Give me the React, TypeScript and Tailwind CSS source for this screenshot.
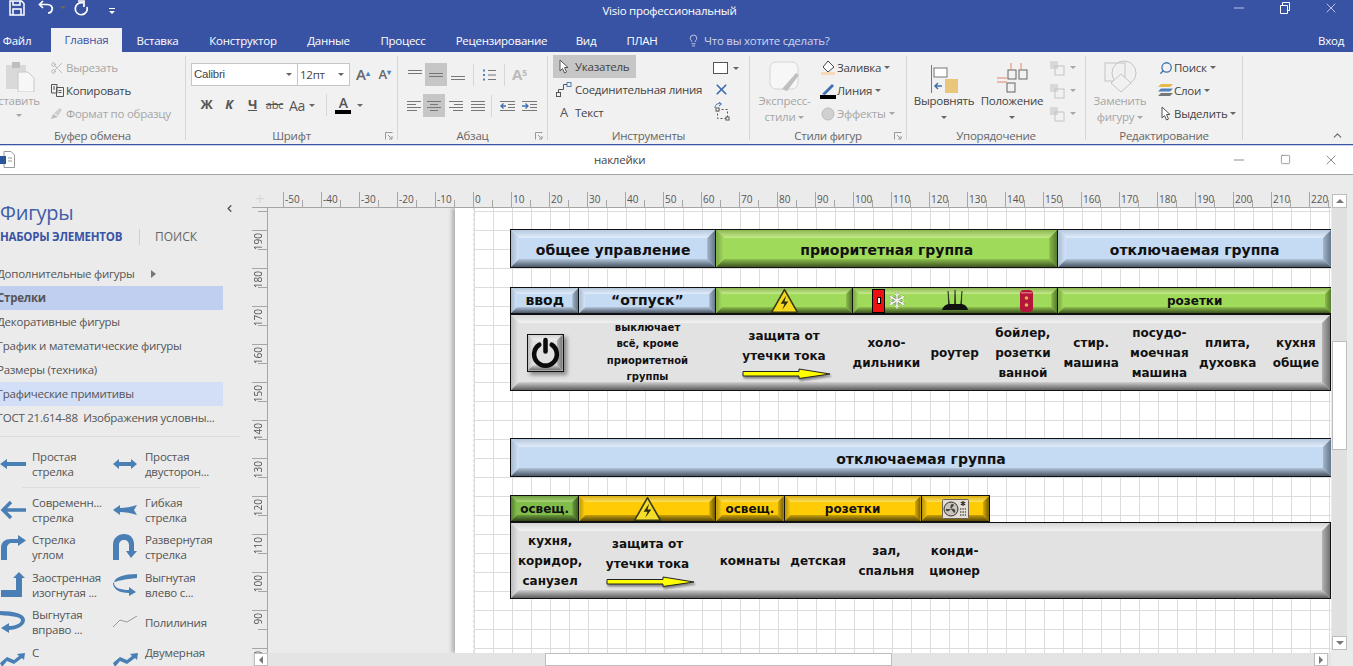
import { ReactNode } from 'react'
import { Scissors, Search, Lightbulb, ChevronUp, ChevronLeft, X, Minus, Square } from 'lucide-react'

const tones = {
    blue: {
        body: 'bg-[#c5daf3]',
        top: 'from-[#b6c9de] to-[#e2edfb]',
        left: 'from-[#a6bad0] to-[#d5e4f6]',
        right: 'from-[#a5b6ca] to-[#66778b]',
        bottom: 'from-[#b4c6db] to-[#4a5766]',
    },
    green: {
        body: 'bg-[#a0da5b]',
        top: 'from-[#8db751] to-[#c5ec8c]',
        left: 'from-[#7ba646] to-[#a5dd60]',
        right: 'from-[#8cbc4d] to-[#567a2d]',
        bottom: 'from-[#8fc04e] to-[#3c5520]',
    },
    moss: {
        body: 'bg-[#80bd4a]',
        top: 'from-[#6f9f3f] to-[#a6d678]',
        left: 'from-[#557d30] to-[#86c24e]',
        right: 'from-[#6f9f3f] to-[#3f5e22]',
        bottom: 'from-[#6b9a3c] to-[#2e4519]',
    },
    yellow: {
        body: 'bg-[#ffcb05]',
        top: 'from-[#d8ad00] to-[#ffe25a]',
        left: 'from-[#b8950a] to-[#ffcf10]',
        right: 'from-[#d9ae00] to-[#6f5a0a]',
        bottom: 'from-[#c9a000] to-[#5a4a0a]',
    },
    gray: {
        body: 'bg-[#e2e2e2]',
        top: 'from-[#d6d6d6] to-[#f2f2f2]',
        left: 'from-[#bdbdbd] to-[#e6e6e6]',
        right: 'from-[#b4b4b4] to-[#727272]',
        bottom: 'from-[#d0d0d0] to-[#606060]',
    },
}

function Bevel({ tone, small, className, children }: { tone: keyof typeof tones; small?: boolean; className?: string; children?: ReactNode }) {
    const t = tones[tone]
    return (
        <div className={`relative -mr-px overflow-hidden border border-[#111] ${t.body} ${className || ''}`}>
            {small ? (
                <>
                    <span className={`absolute inset-x-0 top-0 h-[6px] bg-gradient-to-b ${t.top} [clip-path:polygon(0_0,100%_0,calc(100%-6px)_100%,6px_100%)]`} />
                    <span className={`absolute inset-y-0 left-0 w-[6px] bg-gradient-to-r ${t.left} [clip-path:polygon(0_0,100%_6px,100%_calc(100%-6px),0_100%)]`} />
                    <span className={`absolute inset-y-0 right-0 w-[6px] bg-gradient-to-r ${t.right} [clip-path:polygon(0_6px,100%_0,100%_100%,0_calc(100%-6px))]`} />
                    <span className={`absolute inset-x-0 bottom-0 h-[6px] bg-gradient-to-b ${t.bottom} [clip-path:polygon(6px_0,calc(100%-6px)_0,100%_100%,0_100%)]`} />
                </>
            ) : (
                <>
                    <span className={`absolute inset-x-0 top-0 h-[8px] bg-gradient-to-b ${t.top} [clip-path:polygon(0_0,100%_0,calc(100%-8px)_100%,8px_100%)]`} />
                    <span className={`absolute inset-y-0 left-0 w-[8px] bg-gradient-to-r ${t.left} [clip-path:polygon(0_0,100%_8px,100%_calc(100%-8px),0_100%)]`} />
                    <span className={`absolute inset-y-0 right-0 w-[8px] bg-gradient-to-r ${t.right} [clip-path:polygon(0_8px,100%_0,100%_100%,0_calc(100%-8px))]`} />
                    <span className={`absolute inset-x-0 bottom-0 h-[8px] bg-gradient-to-b ${t.bottom} [clip-path:polygon(8px_0,calc(100%-8px)_0,100%_100%,0_100%)]`} />
                </>
            )}
            <div className="relative flex h-full items-center justify-center text-center font-bold text-[#111]">{children}</div>
        </div>
    )
}

function Hazard({ dark }: { dark?: boolean }) {
    return (
        <svg width="29" height="26" viewBox="0 0 26 24" className="shrink-0">
            <path d="M13 1.5 L25 22.5 H1 Z" fill={dark ? '#f4dc2a' : '#f3d81d'} stroke="#3a3a14" strokeWidth="1.5" strokeLinejoin="round" />
            <path d="M14.5 7 L9.5 14.5 H13 L11 20 L16.5 12.5 H13 Z" fill="#2a2a12" />
        </svg>
    )
}

function YellowArrow() {
    return (
        <svg width="90" height="12" viewBox="0 0 90 12" className="ml-[6px] mt-[2px] drop-shadow-[1px_2px_1px_rgba(0,0,0,0.45)]">
            <path d="M1 3.5 H57 V1 L88 6 L57 10.5 V8 H1 Z" fill="#ffff00" stroke="#222" strokeWidth="1" />
        </svg>
    )
}

function Snowflake() {
    return (
        <svg width="18" height="19" viewBox="0 0 18 18" fill="none" className="shrink-0">
            <path d="M9 1 V17 M2 5 L16 13 M2 13 L16 5" stroke="#6f7f68" strokeWidth="2.6" />
            <path d="M9 1 V17 M2 5 L16 13 M2 13 L16 5" stroke="#f6f6f6" strokeWidth="1.5" />
            <path d="M7 2.5 L9 4.5 L11 2.5 M7 15.5 L9 13.5 L11 15.5 M2 8 L4.5 6.5 L3.5 4 M16 8 L13.5 6.5 L14.5 4 M2 10 L4.5 11.5 L3.5 14 M16 10 L13.5 11.5 L14.5 14" stroke="#f6f6f6" strokeWidth="1" />
        </svg>
    )
}

function Router() {
    return (
        <svg width="28" height="21" viewBox="0 0 28 21" fill="#111" className="shrink-0">
            <path d="M7 1 L8.5 15 H7.6 Z M14 0 L14.7 15 H13.5 Z M21 1 L19.6 15 H20.4 Z" stroke="#111" strokeWidth="0.5" />
            <path d="M1 20 C2 16 6 14 8 14 H20 C23 14 26 16 27 20 Z" />
        </svg>
    )
}

function Boiler() {
    return (
        <svg width="15" height="24" viewBox="0 0 15 24" className="shrink-0">
            <rect x="1" y="1" width="13" height="22" rx="4" fill="#b3163a" />
            <rect x="2" y="3" width="11" height="1.5" fill="#e06a7a" />
            <circle cx="7.5" cy="9" r="1.8" fill="#e8b24f" />
            <circle cx="7.5" cy="16" r="1.8" fill="#e8b24f" />
        </svg>
    )
}

function AirCon() {
    return (
        <svg width="27" height="20" viewBox="0 0 27 20" className="shrink-0">
            <rect x="0.5" y="0.5" width="26" height="19" rx="1" fill="#e6ded4" stroke="#6b6257" />
            <circle cx="9" cy="10" r="7" fill="#c9c3ba" stroke="#333" />
            <path d="M9 10 C7 5 11 4 12 6 Z M9 10 C14 9 14 13 12 14 Z M9 10 C6 14 3 12 4 10 Z" fill="#444" />
            <path d="M21 2 V7 M18.8 3.2 L23.2 5.8 M23.2 3.2 L18.8 5.8" stroke="#222" strokeWidth="1.1" />
            <path d="M18 10 H24 M18 13 H24 M18 16 H24" stroke="#555" strokeWidth="1.6" strokeDasharray="1.4 1" />
        </svg>
    )
}

function PowerButton() {
    return (
        <Bevel tone="gray" small className="!mr-0 h-[38px] w-[37px] shadow-[3px_3px_4px_rgba(0,0,0,0.4)]">
            <svg width="31" height="31" viewBox="0 0 30 30" fill="none" stroke="#0b0b0b" strokeWidth="4.4" strokeLinecap="round" className="shrink-0">
                <path d="M15 3 V14" />
                <path d="M9 7.5 A11 11 0 1 0 21 7.5" />
            </svg>
        </Bevel>
    )
}

function Caret({ light }: { light?: boolean }) {
    return <span className={`inline-block h-0 w-0 border-x-[3px] border-t-[3px] border-x-transparent ${light ? 'border-t-[#a6a6a6]' : 'border-t-[#666]'}`} />
}

function Lines({ rows, w = 14, h = 14, color = '#777' }: { rows: [number, number, number][]; w?: number; h?: number; color?: string }) {
    return (
        <svg width={w} height={h} viewBox={`0 0 ${w} ${h}`} stroke={color} strokeWidth="1">
            {rows.map((r, i) => <path key={i} d={`M${r[0]} ${r[2] + 0.5} H${r[1]}`} />)}
        </svg>
    )
}

function Launcher() {
    return (
        <svg width="8" height="8" viewBox="0 0 8 8" fill="none" stroke="#999">
            <path d="M0.5 7.5 V0.5 H7.5 M3 3 L7 7 M7 4 V7 H4" />
        </svg>
    )
}

function Group({ w, label, launcher, children }: { w: string; label: string; launcher?: boolean; children: ReactNode }) {
    return (
        <div className={`mt-1 flex h-[84px] shrink-0 flex-col border-r border-[#d6d6d6] ${w}`}>
            <div className="h-[72px] shrink-0">{children}</div>
            <div className="relative h-[16px] shrink-0 text-center text-[11.5px] leading-[16px] text-[#666]">
                {label}
                {launcher && <span className="absolute right-[4px] top-[4px] flex"><Launcher /></span>}
            </div>
        </div>
    )
}

function SmallRow({ icon, text, gray, caret, iconW = 'w-[18px]', className }: { icon?: ReactNode; text: string; gray?: boolean; caret?: boolean; iconW?: string; className?: string }) {
    return (
        <div className={`flex h-[23px] items-center whitespace-nowrap text-[11.5px] ${gray ? 'text-[#a6a6a6]' : 'text-[#444]'} ${className || ''}`}>
            <span className={`flex shrink-0 justify-center ${iconW}`}>{icon}</span>
            <span>{text}</span>
            {caret && <span className="ml-[3px] flex"><Caret light={gray} /></span>}
        </div>
    )
}

function BigButton({ w, lines, gray, icon, className }: { w: string; lines: string[]; gray?: boolean; icon: ReactNode; className?: string }) {
    return (
        <div className={`flex flex-col items-center whitespace-nowrap text-[11.5px] leading-[16px] ${gray ? 'text-[#a6a6a6]' : 'text-[#444]'} ${w} ${className || ''}`}>
            <div className="flex h-[37px] items-end">{icon}</div>
            <div>{lines[0]}</div>
            <div className="flex h-[16px] items-center gap-[3px]">{lines[1]}<Caret light={gray} /></div>
        </div>
    )
}

function Ribbon() {
    const tabs = [
        ['Файл', 'w-[34px]'], ['Вставка', 'w-[71px]'], ['Конструктор', 'w-[100px]'], ['Данные', 'w-[71px]'],
        ['Процесс', 'w-[78px]'], ['Рецензирование', 'w-[119px]'], ['Вид', 'w-[50px]'], ['ПЛАН', 'w-[62px]'],
    ]
    return (
        <>
            <div className="relative flex h-[28px] items-start bg-[#3953a4] text-white">
                <svg width="16" height="16" viewBox="0 0 16 16" fill="none" stroke="white" strokeWidth="1.5" className="ml-[9px]">
                    <path d="M1 1 H12.5 L15 3.5 V15 H1 Z" /><path d="M4 1 V5 H11 V1 M4 15 V9 H12 V15" />
                </svg>
                <svg width="16" height="14" viewBox="0 0 16 14" fill="none" stroke="white" strokeWidth="1.7" className="ml-[13px]">
                    <path d="M5 1 L1.5 4.5 L5 8" /><path d="M2 4.5 H9 C13 4.5 15 7 14 10 C13.5 12 12 13 10 13" />
                </svg>
                <span className="ml-[6px] mt-[6px] flex"><Caret /></span>
                <svg width="16" height="16" viewBox="0 0 16 16" fill="none" stroke="white" strokeWidth="1.7" className="ml-[7px]">
                    <path d="M10 3 A6 6 0 1 0 14 7" /><path d="M5 1 H11 V7" />
                </svg>
                <span className="ml-[20px] mt-[8px] flex flex-col items-center gap-[2px]">
                    <span className="h-px w-[6px] bg-white" />
                    <span className="h-0 w-0 border-x-[3px] border-t-[3px] border-x-transparent border-t-white" />
                </span>
                <div className="absolute inset-x-0 top-0 text-center text-[11.5px] leading-[22px]"><span className="ml-[-14px]">Visio профессиональный</span></div>
                <div className="ml-auto flex items-center pr-[14px]">
                    <Minus size={16} strokeWidth={1} />
                    <svg width="12" height="12" viewBox="0 0 12 12" fill="none" stroke="white" className="ml-[32px]"><path d="M1.5 3.5 H8.5 V11.5 H1.5 Z M3.5 3.5 V0.5 H10.5 V8.5 H8.5" /></svg>
                    <X size={16} strokeWidth={1} className="ml-[32px]" />
                </div>
            </div>
            <div className="flex h-[24px] items-end whitespace-nowrap bg-[#3953a4] text-center text-[11.5px] leading-[22px] text-white">
                <div className={tabs[0][1]}>{tabs[0][0]}</div>
                <div className="ml-[17px] h-[24px] w-[71px] bg-[#f1f1f1] leading-[24px] text-[#3953a4]">Главная</div>
                {tabs.slice(1).map(([name, w]) => <div key={name} className={w}>{name}</div>)}
                <Lightbulb size={13} strokeWidth={1.2} className="mb-[5px] ml-[14px]" />
                <span className="ml-[4px] text-[#cfd6ea]">Что вы хотите сделать?</span>
                <span className="ml-auto mr-[9px]">Вход</span>
            </div>
            <div className="flex h-[92px] bg-[#f1f1f1]">
                <Group w="w-[186px]" label="Буфер обмена">
                    <div className="flex">
                        <div className="flex w-[46px] flex-col overflow-hidden text-[11.5px] text-[#a6a6a6]">
                            <svg width="29" height="30" viewBox="0 0 29 30" className="ml-[6px] mt-[6px]">
                                <rect x="0" y="3" width="20" height="24" fill="#d9d9d9" />
                                <rect x="6" y="0" width="8" height="6" fill="#bfbfbf" />
                                <path d="M12 10 H22 L28 16 V30 H12 Z" fill="#f7f7f7" stroke="#c8c8c8" />
                            </svg>
                            <div className="-ml-[9px] mt-[1px] h-[16px] whitespace-nowrap leading-[16px]">Вставить</div>
                            <div className="ml-[16px] mt-[5px] flex"><Caret light /></div>
                        </div>
                        <div className="ml-[2px]">
                            <SmallRow gray text="Вырезать" icon={<Scissors size={14} strokeWidth={1.2} color="#a6a6a6" />} />
                            <SmallRow text="Копировать" icon={
                                <svg width="13" height="13" viewBox="0 0 13 13" fill="none" stroke="#555"><path d="M0.5 0.5 H6 V9 H0.5 Z M5.5 3.5 H12.5 V12.5 H5.5 Z M2 3 H4 M2 5 H4 M7.5 6.5 H10.5 M7.5 8.5 H10.5" /></svg>
                            } />
                            <SmallRow gray text="Формат по образцу" icon={
                                <svg width="15" height="13" viewBox="0 0 15 13"><path d="M1 12 L3 7 L8 10 Z" fill="#bdbdbd" /><path d="M4 6 L10 1 L12 3 L8 9 Z" fill="#cfcfcf" /></svg>
                            } />
                        </div>
                    </div>
                </Group>
                <Group w="w-[212px]" label="Шрифт" launcher>
                    <div className="flex items-center pl-[5px] pt-[7px] text-[11.5px] text-[#444]">
                        <div className="flex h-[23px] w-[107px] items-center justify-between border border-[#c6c6c6] bg-white px-[2px]"><span className="font-['Liberation_Sans',sans-serif]">Calibri</span><span className="mr-[3px] flex"><Caret /></span></div>
                        <div className="-ml-px flex h-[23px] w-[53px] items-center justify-between border border-[#c6c6c6] bg-white px-[2px]"><span>12пт</span><span className="mr-[3px] flex"><Caret /></span></div>
                        <span className="ml-[6px] text-[15px] font-semibold leading-none text-[#666]">A<sup className="text-[8px] text-[#4f81bd]">▴</sup></span>
                        <span className="ml-[9px] text-[13px] font-semibold leading-none text-[#666]">A<sup className="text-[8px] text-[#4f81bd]">▾</sup></span>
                    </div>
                    <div className="mt-[8px] flex h-[22px] items-center pl-[10px] text-[#555]">
                        <span className="w-[21px] text-center text-[13px] font-bold">Ж</span>
                        <span className="w-[24px] text-center text-[13px] font-bold italic">К</span>
                        <span className="w-[23px] text-center text-[13px] font-bold underline">Ч</span>
                        <span className="w-[21px] text-center text-[11px] line-through">abc</span>
                        <span className="ml-[4px] text-[14px]">Aa</span>
                        <span className="ml-[4px] flex"><Caret /></span>
                        <span className="ml-[11px] h-[22px] border-l border-[#d6d6d6]" />
                        <span className="ml-[8px] flex w-[16px] flex-col items-center text-[14px] font-semibold leading-[14px]">A<span className="h-[4px] w-[16px] bg-black" /></span>
                        <span className="ml-[6px] flex"><Caret /></span>
                    </div>
                </Group>
                <Group w="w-[150px]" label="Абзац" launcher>
                    <div className="mt-[7px] flex h-[23px] items-center pl-[10px]">
                        <Lines rows={[[0, 14, 2], [0, 14, 5]]} />
                        <span className="ml-[3px] flex h-[23px] w-[22px] items-center justify-center bg-[#c6c6c6]"><Lines rows={[[0, 14, 5], [0, 14, 8]]} /></span>
                        <span className="ml-[4px] flex"><Lines rows={[[0, 14, 8], [0, 14, 11]]} /></span>
                        <span className="ml-[8px] h-[22px] border-l border-[#d6d6d6]" />
                        <span className="ml-[8px] flex">
                            <svg width="14" height="14" viewBox="0 0 14 14" stroke="#777">
                                <path d="M6 2.5 H14 M6 7 H14 M6 11.5 H14" />
                                <path d="M1 2.5 H3 M1 7 H3 M1 11.5 H3" stroke="#4f81bd" strokeWidth="2" />
                            </svg>
                        </span>
                        <span className="ml-[8px] h-[22px] border-l border-[#d6d6d6]" />
                        <span className="ml-[7px] text-[15px] font-bold leading-none text-[#bbb]">A<sup className="text-[9px]">5</sup></span>
                    </div>
                    <div className="mt-[8px] flex h-[23px] items-center pl-[9px]">
                        <Lines rows={[[0, 14, 2], [0, 9, 5], [0, 14, 8], [0, 10, 11]]} />
                        <span className="ml-[2px] flex h-[23px] w-[22px] items-center justify-center bg-[#c6c6c6]"><Lines rows={[[0, 14, 2], [3, 11, 5], [0, 14, 8], [3, 11, 11]]} /></span>
                        <span className="ml-[4px] flex"><Lines rows={[[0, 14, 2], [5, 14, 5], [0, 14, 8], [4, 14, 11]]} /></span>
                        <span className="ml-[8px] flex"><Lines rows={[[0, 14, 2], [0, 14, 5], [0, 14, 8], [0, 14, 11]]} /></span>
                        <span className="ml-[6px] h-[22px] border-l border-[#d6d6d6]" />
                        <span className="ml-[8px] flex">
                            <svg width="15" height="14" viewBox="0 0 15 14" fill="none" stroke="#777">
                                <path d="M0 2.5 H15 M8 5.5 H15 M8 8.5 H15 M0 11.5 H15" />
                                <path d="M6 7 H1 M3.5 4.5 L1 7 L3.5 9.5" stroke="#3f6fb0" strokeWidth="1.3" />
                            </svg>
                        </span>
                        <span className="ml-[7px] flex">
                            <svg width="15" height="14" viewBox="0 0 15 14" fill="none" stroke="#777">
                                <path d="M0 2.5 H15 M8 5.5 H15 M8 8.5 H15 M0 11.5 H15" />
                                <path d="M0 7 H6 M3.5 4.5 L6 7 L3.5 9.5" stroke="#3f6fb0" strokeWidth="1.3" />
                            </svg>
                        </span>
                    </div>
                </Group>
                <Group w="w-[202px]" label="Инструменты">
                    <div className="flex">
                        <div className="w-[165px] pl-[5px]">
                            <SmallRow text="Указатель" iconW="w-[22px]" className="-mt-[1px] w-[83px] bg-[#c6c6c6]" icon={
                                <svg width="10" height="15" viewBox="0 0 10 15" fill="#fff" stroke="#555"><path d="M1 1 V12 L3.5 9.5 L5.5 14 L7.5 13 L5.5 8.5 H9 Z" /></svg>
                            } />
                            <SmallRow text="Соединительная линия" iconW="w-[22px]" icon={
                                <svg width="16" height="15" viewBox="0 0 16 15" fill="none" stroke="#4f81bd"><rect x="11" y="0.5" width="4" height="4" /><rect x="0.5" y="10.5" width="4" height="4" stroke="#555" /><path d="M11 2.5 H7.5 V7.5 H2.5 V10.5" stroke="#555" /></svg>
                            } />
                            <SmallRow text="Текст" iconW="w-[22px]" icon={<span className="text-[13px] text-[#555]">A</span>} />
                        </div>
                        <div className="flex flex-col items-start pt-[2px]">
                            <div className="flex h-[20px] items-center gap-[5px]"><span className="h-[12px] w-[15px] border border-[#555] bg-white" /><Caret /></div>
                            <X size={17} strokeWidth={2.4} color="#3f6fb0" className="mt-[3px]" />
                            <svg width="17" height="19" viewBox="0 0 17 19" fill="none" stroke="#555" className="mt-[4px]">
                                <rect x="4.5" y="7.5" width="10" height="9" strokeDasharray="2 2" />
                                <rect x="3" y="6" width="3" height="3" fill="#fff" /><rect x="13" y="15" width="3" height="3" fill="#fff" />
                                <path d="M2 6 C2 2 5 1 8 2 M6 0 L8.5 2 L6 4" stroke="#3f6fb0" />
                            </svg>
                        </div>
                    </div>
                </Group>
                <Group w="w-[157px]" label="Стили фигур" launcher>
                    <div className="flex">
                        <BigButton gray w="w-[67px]" lines={['Экспресс-', 'стили']} className="pl-[2px]" icon={
                            <svg width="31" height="32" viewBox="0 0 31 32"><rect x="1" y="1" width="28" height="27" rx="6" fill="#f7f7f7" stroke="#d5d5d5" /><path d="M13 28 L27 12 L30 14 L18 30 Z" fill="#bfbfbf" /></svg>
                        } />
                        <div className="ml-[1px]">
                            <SmallRow caret text="Заливка" iconW="w-[19px]" icon={
                                <svg width="14" height="15" viewBox="0 0 14 15"><path d="M7 1 L13 7 L7 12 L2 7 Z" fill="#fff" stroke="#444" /><rect x="0" y="12" width="14" height="3" fill="#f8d9b8" /></svg>
                            } />
                            <SmallRow caret text="Линия" iconW="w-[19px]" icon={
                                <svg width="16" height="16" viewBox="0 0 16 16"><path d="M2 11 L12 1 L14 3 L5 12 Z" fill="#3f6fb0" /><rect x="0" y="12" width="16" height="4" fill="#000" /></svg>
                            } />
                            <SmallRow gray caret text="Эффекты" iconW="w-[19px]" icon={
                                <svg width="14" height="14" viewBox="0 0 14 14"><circle cx="7" cy="7" r="6" fill="#d0d0d0" stroke="#bbb" /></svg>
                            } />
                        </div>
                    </div>
                </Group>
                <Group w="w-[179px]" label="Упорядочение">
                    <div className="flex pl-[6px]">
                        <BigButton w="w-[62px]" lines={['Выровнять', '']} icon={
                            <svg width="27" height="28" viewBox="0 0 27 28"><path d="M0.5 0 V28" stroke="#777" /><rect x="3" y="3" width="13" height="9" fill="#fff" stroke="#777" /><rect x="14" y="14" width="13" height="14" fill="#eac67a" /><path d="M11 21 H4 M7 18 L4 21 L7 24" fill="none" stroke="#3f6fb0" strokeWidth="1.5" /></svg>
                        } />
                        <BigButton w="w-[68px]" lines={['Положение', '']} className="ml-[3px]" icon={
                            <svg width="33" height="30" viewBox="0 0 33 30" fill="none" stroke="#666"><rect x="12" y="7" width="8" height="9" /><rect x="23" y="7" width="8" height="9" /><rect x="11" y="20" width="8" height="9" /><path d="M1 15 H11 M1 19 H11 M15 0 V7 M25 0 V7" stroke="#d98a6b" /></svg>
                        } />
                        <div className="ml-[3px] flex flex-col">
                            {[0, 1, 2].map((i) => (
                                <div key={i} className="flex h-[23px] items-center gap-[5px]">
                                    <svg width="16" height="16" viewBox="0 0 16 16"><rect x="1" y="1" width="8" height="8" fill="#d8d8d8" /><rect x="6" y="6" width="9" height="9" fill="none" stroke="#c4c4c4" /></svg>
                                    <Caret light />
                                </div>
                            ))}
                        </div>
                    </div>
                </Group>
                <Group w="w-[157px]" label="Редактирование">
                    <div className="flex">
                        <BigButton gray w="w-[68px]" lines={['Заменить', 'фигуру']} icon={
                            <svg width="33" height="33" viewBox="0 0 33 33" fill="none" stroke="#c4c4c4"><rect x="1" y="3" width="20" height="18" /><circle cx="20" cy="13" r="12" /><path d="M17 14 L27 23 L17 32 L7 23 Z" fill="#f1f1f1" /></svg>
                        } />
                        <div className="ml-[3px]">
                            <SmallRow caret text="Поиск" iconW="w-[17px]" icon={<Search size={14} strokeWidth={2.2} color="#3f6fb0" className="-scale-x-100" />} />
                            <SmallRow caret text="Слои" iconW="w-[17px]" icon={
                                <svg width="15" height="13" viewBox="0 0 15 13"><path d="M3 0 H15 L12 3 H0 Z" fill="#e8b84a" /><path d="M3 4.5 H15 L12 7.5 H0 Z" fill="#4f81bd" /><path d="M3 9 H15 L12 12 H0 Z" fill="#777" /></svg>
                            } />
                            <SmallRow caret text="Выделить" iconW="w-[17px]" icon={
                                <svg width="10" height="15" viewBox="0 0 10 15" fill="#fff" stroke="#555"><path d="M1 1 V12 L3.5 9.5 L5.5 14 L7.5 13 L5.5 8.5 H9 Z" /></svg>
                            } />
                        </div>
                    </div>
                </Group>
                <div className="ml-auto mr-[9px] flex items-end pb-[2px]"><ChevronUp size={13} color="#666" /></div>
            </div>
            <div className="h-[2px] border-t border-[#3953a4] bg-[#c9d2e8]" />
            <div className="relative flex h-[29px] items-center border-b border-[#a6a6a6] bg-white pb-px">
                <svg width="15" height="17" viewBox="0 0 15 17"><path d="M4 0.5 H11 L14.5 4 V16.5 H4 Z" fill="#fff" stroke="#999" /><rect x="0" y="5" width="6" height="8" fill="#2b579a" /><path d="M8 7 H12 M8 10 H12" stroke="#999" /></svg>
                <span className="absolute left-[594px] text-[11.5px] text-[#444]">наклейки</span>
                <div className="ml-auto flex items-center pr-[14px] text-[#555]">
                    <Minus size={16} strokeWidth={1} />
                    <Square size={11} strokeWidth={1.2} className="ml-[33px]" />
                    <X size={16} strokeWidth={1} className="ml-[32px]" />
                </div>
            </div>
        </>
    )
}

function Stencil({ icon, lines }: { icon: ReactNode; lines: string[] }) {
    return (
        <div className="flex h-full w-[113px] shrink-0 items-center">
            <div className="flex w-[32px] shrink-0 justify-start">{icon}</div>
            <div className="whitespace-nowrap text-[11.5px] leading-[15px] text-[#555]">
                {lines.map((l) => <div key={l}>{l}</div>)}
            </div>
        </div>
    )
}

const blue = '#4a7fb5'
const stencilIcons = {
    left: <svg width="26" height="10" viewBox="0 0 26 10" fill={blue}><path d="M0 5 L7 0 V3 H26 V7 H7 V10 Z" /></svg>,
    both: <svg width="24" height="10" viewBox="0 0 24 10" fill={blue}><path d="M0 5 L6 0 V3 H18 V0 L24 5 L18 10 V7 H6 V10 Z" /></svg>,
    modern: <svg width="26" height="20" viewBox="0 0 26 20" fill="none" stroke={blue} strokeWidth="3.4"><path d="M26 10 H3 M11 2 L3 10 L11 18" /></svg>,
    flex: <svg width="24" height="12" viewBox="0 0 24 12" fill={blue}><path d="M0 6 L7 1 V4 C12 4 18 3 24 1 L21 6 L24 11 C18 9 12 8 7 8 V11 Z" /></svg>,
    corner: <svg width="26" height="25" viewBox="0 0 26 25" fill={blue}><path d="M1 25 V13 C1 7 5 4 11 4 H18 V0 L26 5.5 L18 11 V8 H12 C9 8 7 10 7 13 V25 Z" /></svg>,
    uturn: <svg width="24" height="26" viewBox="0 0 24 26" fill={blue}><path d="M0 26 V11 C0 4 5 0 11 0 C17 0 21 4 21 10 V17 H24 L18 24 L13 17 H16 V11 C16 8 14 6 11 6 C8 6 6 8 6 11 V26 Z" /></svg>,
    bent: <svg width="26" height="25" viewBox="0 0 26 25" fill={blue}><path d="M1 18 H16 V6 H13 L19 0 L25 6 H22 V25 H1 Z" /></svg>,
    curveL: <svg width="24" height="24" viewBox="0 0 24 24" fill={blue}><path d="M24 1 C12 1 1 4 1 10 C1 15 8 17 16 17 V14 L23 19 L16 23 V20 C6 20 0 16 0 10 C3 8 12 6 24 5 Z" /></svg>,
    curveR: <svg width="26" height="24" viewBox="0 0 26 24" fill={blue}><path d="M0 1 C14 1 25 4 25 10 C25 17 14 20 9 20 V23 L1 18 L9 13 V16 C14 16 21 14 21 10 C21 7 12 6 0 5 Z" /></svg>,
    poly: <svg width="24" height="12" viewBox="0 0 24 12" fill="none" stroke="#999"><path d="M0 11 L7 4 L14 6 L24 0" /></svg>,
    wave: <svg width="25" height="14" viewBox="0 0 25 14" fill={blue}><path d="M0 10 L7 4 L14 7 L19 3 L17 1 L25 0 L24 7 L22 5 L14 11 L7 8 L2 14 Z" /></svg>,
}

function ShapesPanel() {
    const sets = ['Дополнительные фигуры', 'Стрелки', 'Декоративные фигуры', 'График и математические фигуры', 'Размеры (техника)', 'Графические примитивы', 'ГОСТ 21.614-88  Изображения условны...']
    return (
        <div className="w-[252px] shrink-0 overflow-hidden bg-[#ebebeb]">
            <div className="mt-[25px] flex h-[25px] items-center justify-between whitespace-nowrap pr-[17px] text-[20px] leading-[25px] text-[#3f5da8]">
                Фигуры
                <ChevronLeft size={11} strokeWidth={3} color="#555" className="-mt-[8px]" />
            </div>
            <div className="-mt-px flex h-[25px] items-center whitespace-nowrap text-[11.5px]">
                <span className="w-[140px] border-r border-[#d0d0d0] font-bold leading-[16px] text-[#3953a4]">НАБОРЫ ЭЛЕМЕНТОВ</span>
                <span className="ml-[15px] text-[12px] tracking-normal text-[#666]">ПОИСК</span>
            </div>
            <div className="mt-[13px] w-[223px]">
                {sets.map((s, i) => (
                    <div key={s} className={`flex h-[24px] items-center whitespace-pre text-[11.5px] text-[#555] ${i === 1 ? 'bg-[#c0cff0] font-bold text-[#333]' : ''} ${i === 5 ? 'bg-[#d3dff6]' : ''}`}>
                        <span className="-ml-[3px]">{s}</span>
                        {i === 0 && <span className="ml-[16px] h-0 w-0 border-y-[4px] border-l-[5px] border-y-transparent border-l-[#777]" />}
                    </div>
                ))}
            </div>
            <div className="mt-[6px] h-px w-[240px] bg-[#dddddd]" />
            <div className="mt-[4px] flex h-[46px]">
                <Stencil icon={stencilIcons.left} lines={['Простая', 'стрелка']} />
                <Stencil icon={stencilIcons.both} lines={['Простая', 'двусторон...']} />
            </div>
            <div className="ml-[22px] h-px w-[178px] bg-[#dddddd]" />
            <div className="mt-[3px] flex h-[38px]">
                <Stencil icon={stencilIcons.modern} lines={['Современн...', 'стрелка']} />
                <Stencil icon={stencilIcons.flex} lines={['Гибкая', 'стрелка']} />
            </div>
            <div className="flex h-[36px]">
                <Stencil icon={stencilIcons.corner} lines={['Стрелка', 'углом']} />
                <Stencil icon={stencilIcons.uturn} lines={['Развернутая', 'стрелка']} />
            </div>
            <div className="mt-[1px] flex h-[37px]">
                <Stencil icon={stencilIcons.bent} lines={['Заостренная', 'изогнутая ...']} />
                <Stencil icon={stencilIcons.curveL} lines={['Выгнутая', 'влево с...']} />
            </div>
            <div className="flex h-[38px]">
                <Stencil icon={stencilIcons.curveR} lines={['Выгнутая', 'вправо ...']} />
                <Stencil icon={stencilIcons.poly} lines={['Полилиния']} />
            </div>
            <div className="flex h-[38px]">
                <Stencil icon={stencilIcons.wave} lines={['С', 'нескольк...']} />
                <Stencil icon={stencilIcons.wave} lines={['Двумерная', 'полилиния']} />
            </div>
        </div>
    )
}

function TopRuler() {
    const marks: number[] = []
    for (let v = -50; v <= 220; v += 10) marks.push(v)
    return (
        <div className="flex h-[16px] border-b border-[#a6a6a6] tracking-normal">
            <div className="relative w-[16px] shrink-0 text-center text-[16px] leading-[14px] text-[#d8d8d8]">+</div>
            <div className="flex flex-1 overflow-hidden pl-[15px]">
                {marks.map((v) => (
                    <div key={v} className="flex w-[38px] shrink-0">
                        <div className="w-[19px] border-l border-[#a6a6a6] pl-[1px] text-[10px] leading-[15px] text-[#555]">{v}</div>
                        <div className="mt-[8px] w-[19px] border-l border-[#a6a6a6]" />
                    </div>
                ))}
            </div>
        </div>
    )
}

function SideRuler() {
    const marks: number[] = []
    for (let v = 190; v >= 80; v -= 10) marks.push(v)
    return (
        <div className="w-[16px] shrink-0 overflow-hidden border-r border-[#a6a6a6] tracking-normal">
            <div className="h-[22px]"><div className="ml-[6px] mt-[3px] inline-block w-[10px] border-t border-[#a6a6a6] align-top" /></div>
            {marks.map((v) => (
                <div key={v} className="h-[38px]">
                    <div className="h-[19px] border-t border-[#a6a6a6] text-[10px] leading-none text-[#555]">
                        <span className="ml-[1px] mt-[2px] inline-block rotate-180 [writing-mode:vertical-rl]">{v}</span>
                    </div>
                    <div className="ml-[6px] border-t border-[#a6a6a6]" />
                </div>
            ))}
        </div>
    )
}

function Cell({ span, className, children }: { span: string; className?: string; children: ReactNode }) {
    return <div className={`flex flex-col items-center justify-center text-center text-[12px] font-bold leading-[20px] text-[#111] ${span} ${className || ''}`}>{children}</div>
}

function Canvas() {
    return (
        <div className="relative flex flex-1 overflow-hidden">
            <SideRuler />
            <div className="w-[187px] shrink-0 bg-[#ebebeb]" />
            <div className="flex flex-1 bg-white shadow-[-3px_0_4px_rgba(0,0,0,0.25)]">
                <div className="w-[19px] shrink-0 border-r border-dashed border-[#e2e2e2]" />
                <div className="flex-1 bg-[linear-gradient(to_right,#dcdcdc_1px,transparent_1px),linear-gradient(to_bottom,#dcdcdc_1px,transparent_1px)] bg-[size:19px_19px] bg-[position:0_3px] pl-[36px] pt-[21px] font-['DejaVu_Sans',sans-serif] tracking-normal">
                    <div className="grid h-[39px] w-[821px] grid-cols-12 text-[14px]">
                        <Bevel tone="blue" className="col-span-3"><span className="mt-[3px]">общее управление</span></Bevel>
                        <Bevel tone="green" className="col-span-5"><span className="mt-[3px]">приоритетная группа</span></Bevel>
                        <Bevel tone="blue" className="col-span-4"><span className="mt-[3px]">отключаемая группа</span></Bevel>
                    </div>
                    <div className="mt-[19px] grid h-[27px] w-[821px] grid-cols-12">
                        <Bevel tone="blue" small className="col-span-1 text-[14px]">ввод</Bevel>
                        <Bevel tone="blue" small className="col-span-2 text-[14px]">“отпуск”</Bevel>
                        <Bevel tone="green" small className="col-span-2"><Hazard /></Bevel>
                        <Bevel tone="green" small className="col-span-3">
                            <div className="flex w-full items-center pl-[19px]">
                                <span className="flex h-[24px] w-[13px] shrink-0 items-center justify-center border border-black bg-[#ee1111]"><span className="h-[7px] w-[4px] border border-black bg-white" /></span>
                                <span className="ml-[3px] flex"><Snowflake /></span>
                                <span className="ml-[35px] flex"><Router /></span>
                                <span className="ml-[50px] flex"><Boiler /></span>
                            </div>
                        </Bevel>
                        <Bevel tone="green" small className="col-span-4 text-[12px]">розетки</Bevel>
                    </div>
                    <Bevel tone="gray" className="!mr-0 h-[77px] w-[821px]">
                        <div className="grid h-full w-full grid-cols-12">
                            <Cell span="col-span-1"><PowerButton /></Cell>
                            <Cell span="col-span-2" className="!text-[10px] !leading-[16.5px]"><div>выключает</div><div>всё, кроме</div><div>приоритетной</div><div>группы</div></Cell>
                            <Cell span="col-span-2"><div>защита от</div><div>утечки тока</div><YellowArrow /></Cell>
                            <Cell span="col-span-1"><div>холо-</div><div>дильники</div></Cell>
                            <Cell span="col-span-1">роутер</Cell>
                            <Cell span="col-span-1"><div>бойлер,</div><div>розетки</div><div>ванной</div></Cell>
                            <Cell span="col-span-1"><div>стир.</div><div>машина</div></Cell>
                            <Cell span="col-span-1"><div>посудо-</div><div>моечная</div><div>машина</div></Cell>
                            <Cell span="col-span-1"><div>плита,</div><div>духовка</div></Cell>
                            <Cell span="col-span-1"><div>кухня</div><div>общие</div></Cell>
                        </div>
                    </Bevel>
                    <div className="mt-[47px] grid h-[39px] w-[821px] grid-cols-12 text-[14px]">
                        <Bevel tone="blue" className="col-span-12"><span className="mt-[3px]">отключаемая группа</span></Bevel>
                    </div>
                    <div className="mt-[18px] grid h-[27px] w-[821px] grid-cols-12 text-[12px]">
                        <Bevel tone="moss" small className="col-span-1">освещ.</Bevel>
                        <Bevel tone="yellow" small className="col-span-2"><Hazard dark /></Bevel>
                        <Bevel tone="yellow" small className="col-span-1">освещ.</Bevel>
                        <Bevel tone="yellow" small className="col-span-2">розетки</Bevel>
                        <Bevel tone="yellow" small className="col-span-1"><AirCon /></Bevel>
                    </div>
                    <Bevel tone="gray" className="!mr-0 h-[77px] w-[821px]">
                        <div className="grid h-full w-full grid-cols-12">
                            <Cell span="col-span-1" className="pl-[10px]"><div>кухня,</div><div>коридор,</div><div>санузел</div></Cell>
                            <Cell span="col-span-2"><div>защита от</div><div>утечки тока</div><YellowArrow /></Cell>
                            <Cell span="col-span-1">комнаты</Cell>
                            <Cell span="col-span-1">детская</Cell>
                            <Cell span="col-span-1"><div>зал,</div><div>спальня</div></Cell>
                            <Cell span="col-span-1"><div>конди-</div><div>ционер</div></Cell>
                        </div>
                    </Bevel>
                </div>
            </div>
        </div>
    )
}

function ScrollButton({ up }: { up?: boolean }) {
    return (
        <div className="flex h-[14px] w-[15px] items-center justify-center border border-[#bdbdbd] bg-white">
            <span className={`h-0 w-0 border-x-[4px] border-x-transparent ${up ? 'border-b-[4px] border-b-[#777]' : 'border-t-[4px] border-t-[#777]'}`} />
        </div>
    )
}

export default function App() {
    return (
        <div className="flex h-[666px] w-[1353px] flex-col overflow-hidden bg-[#ebebeb] font-['Open_Sans',sans-serif] tracking-[-0.25px]">
            <Ribbon />
            <div className="flex flex-1 overflow-hidden">
                <ShapesPanel />
                <div className="flex w-[1079px] shrink-0 flex-col">
                    <div className="h-[17px]" />
                    <TopRuler />
                    <Canvas />
                    <div className="flex h-[13px] items-center bg-[#e4e4e4]">
                        <div className="ml-[2px] flex h-[13px] w-[14px] items-center justify-center border border-[#bdbdbd] bg-white"><span className="h-0 w-0 border-y-[4px] border-r-[4px] border-y-transparent border-r-[#777]" /></div>
                        <div className="ml-[277px] h-[13px] w-[347px] border border-[#bdbdbd] bg-white" />
                        <div className="ml-[422px] flex h-[13px] w-[14px] items-center justify-center border border-[#bdbdbd] bg-white"><span className="h-0 w-0 border-y-[4px] border-l-[4px] border-y-transparent border-l-[#777]" /></div>
                    </div>
                </div>
                <div className="flex w-[22px] flex-col pb-[16px] pl-px pt-[19px]">
                    <ScrollButton up />
                    <div className="w-[15px] flex-1 bg-[#e0e0e0] pt-[133px]">
                        <div className="h-[109px] border border-[#bdbdbd] bg-white" />
                    </div>
                    <ScrollButton />
                </div>
            </div>
        </div>
    )
}
